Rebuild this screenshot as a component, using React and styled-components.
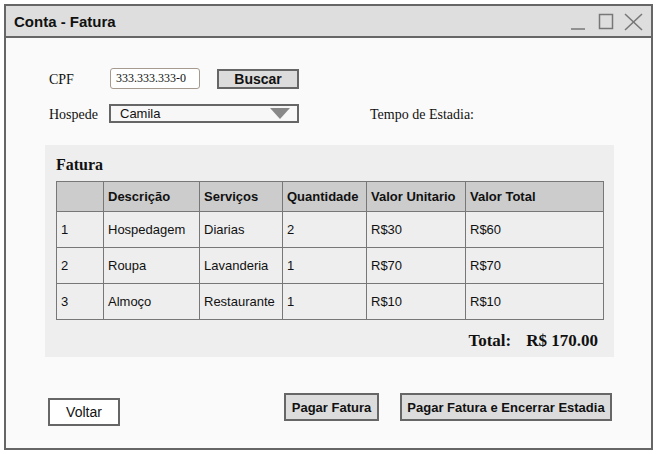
import styled, { createGlobalStyle } from "styled-components";

const GlobalStyle = createGlobalStyle`
  html, body {
    margin: 0;
    padding: 0;
    background: #ffffff;
  }
  body {
    font-family: "Liberation Sans", Arial, sans-serif;
    color: #111;
  }
`;

const items = [
  { n: "1", desc: "Hospedagem", serv: "Diarias", qtd: "2", unit: "R$30", total: "R$60" },
  { n: "2", desc: "Roupa", serv: "Lavanderia", qtd: "1", unit: "R$70", total: "R$70" },
  { n: "3", desc: "Almoço", serv: "Restaurante", qtd: "1", unit: "R$10", total: "R$10" },
];

const colWidths = [47, 96, 83, 84, 99, 138];

export default function App() {
  return (
    <>
      <GlobalStyle />
      <Window>
        <TitleBar>
          <Title>Conta - Fatura</Title>
          <Controls width="80" height="20" viewBox="0 0 80 20">
            <line x1="4" y1="17" x2="18" y2="17" />
            <rect x="32.5" y="2.5" width="13" height="14" />
            <line x1="58" y1="2" x2="75" y2="18" />
            <line x1="75" y1="2" x2="58" y2="18" />
          </Controls>
        </TitleBar>
        <Content>
          <Form>
            <Row>
              <Label width={61}>CPF</Label>
              <CpfInput>333.333.333-0</CpfInput>
              <GrayButton $w={82} $h={20} $size={14}>Buscar</GrayButton>
            </Row>
            <Row $gap={15}>
              <Label width={60}>Hospede</Label>
              <Select>
                <span>Camila</span>
                <Arrow width="20" height="11" viewBox="0 0 20 11">
                  <polygon points="0,0 20,0 10,11" />
                </Arrow>
              </Select>
              <StayLabel>Tempo de Estadia:</StayLabel>
            </Row>
          </Form>
          <Panel>
            <PanelTitle>Fatura</PanelTitle>
            <Table>
              <colgroup>
                {colWidths.map((w, i) => (
                  <col key={i} style={{ width: w }} />
                ))}
              </colgroup>
              <thead>
                <tr>
                  <Th></Th>
                  <Th>Descrição</Th>
                  <Th>Serviços</Th>
                  <Th>Quantidade</Th>
                  <Th>Valor Unitario</Th>
                  <Th>Valor Total</Th>
                </tr>
              </thead>
              <tbody>
                {items.map((it) => (
                  <tr key={it.n}>
                    <Td>{it.n}</Td>
                    <Td>{it.desc}</Td>
                    <Td>{it.serv}</Td>
                    <Td>{it.qtd}</Td>
                    <Td>{it.unit}</Td>
                    <Td>{it.total}</Td>
                  </tr>
                ))}
              </tbody>
            </Table>
            <TotalLine>
              <span>Total:</span>
              <TotalValue>R$ 170.00</TotalValue>
            </TotalLine>
          </Panel>
          <Footer>
            <PlainButton>Voltar</PlainButton>
            <Actions>
              <GrayButton $w={95} $h={28} $size={13}>Pagar Fatura</GrayButton>
              <GrayButton $w={212} $h={28} $size={13}>Pagar Fatura e Encerrar Estadia</GrayButton>
            </Actions>
          </Footer>
        </Content>
      </Window>
    </>
  );
}

const Window = styled.div`
  box-sizing: border-box;
  margin: 4px 0 0 4px;
  width: 649px;
  height: 446px;
  border: 2px solid #666;
  background: #fafafa;
  display: flex;
  flex-direction: column;
`;

const TitleBar = styled.div`
  height: 30px;
  border-bottom: 2px solid #666;
  background: #dedede;
  display: flex;
  align-items: center;
  justify-content: space-between;
  padding: 0 4px 0 8px;
`;

const Title = styled.div`
  font-weight: bold;
  font-size: 15px;
`;

const Controls = styled.svg`
  stroke: #777;
  stroke-width: 1.5;
  fill: none;
  margin-top: 2px;
`;

const Content = styled.div`
  padding: 30px 37px 0 39px;
  display: flex;
  flex-direction: column;
`;

const Form = styled.div`
  padding-left: 4px;
  display: flex;
  flex-direction: column;
`;

const Row = styled.div`
  display: flex;
  align-items: center;
  margin-top: ${(p) => p.$gap || 0}px;
`;

const Label = styled.div`
  width: ${(p) => p.width}px;
  font-family: "Liberation Serif", "Times New Roman", serif;
  font-size: 14px;
  padding-top: 2px;
`;

const CpfInput = styled.div`
  box-sizing: border-box;
  width: 90px;
  height: 21px;
  margin-right: 17px;
  border: 1px solid #a69a8e;
  border-radius: 3px;
  background: #fff;
  padding-left: 5px;
  display: flex;
  align-items: center;
  font-family: "Liberation Serif", "Times New Roman", serif;
  font-size: 12px;
`;

const GrayButton = styled.div`
  box-sizing: border-box;
  width: ${(p) => p.$w}px;
  height: ${(p) => p.$h}px;
  border: 2px solid #666;
  background: #dcdcdc;
  display: flex;
  align-items: center;
  justify-content: center;
  font-weight: bold;
  font-size: ${(p) => p.$size}px;
`;

const PlainButton = styled.div`
  box-sizing: border-box;
  width: 72px;
  height: 28px;
  margin-top: 5px;
  border: 2px solid #666;
  background: #fff;
  display: flex;
  align-items: center;
  justify-content: center;
  font-size: 14px;
`;

const Select = styled.div`
  box-sizing: border-box;
  width: 190px;
  height: 19px;
  border: 2px solid #666;
  background: #f7f7f7;
  display: flex;
  align-items: center;
  justify-content: space-between;
  padding: 0 7px 0 9px;
  font-size: 13px;
`;

const Arrow = styled.svg`
  fill: #888;
`;

const StayLabel = styled.div`
  margin-left: 71px;
  font-family: "Liberation Serif", "Times New Roman", serif;
  font-size: 14px;
  padding-top: 2px;
`;

const Panel = styled.div`
  margin-top: 22px;
  background: #eeeeee;
  padding: 10px 11px 6px 11px;
  display: flex;
  flex-direction: column;
`;

const PanelTitle = styled.div`
  font-family: "Liberation Serif", "Times New Roman", serif;
  font-weight: bold;
  font-size: 16px;
  line-height: 20px;
  margin-bottom: 6px;
`;

const Table = styled.table`
  border-collapse: collapse;
  table-layout: fixed;
  width: 548px;
  font-size: 13px;
`;

const Th = styled.th`
  height: 29px;
  padding: 0 4px;
  border: 1px solid #777;
  background: #cccccc;
  text-align: left;
  font-weight: bold;
`;

const Td = styled.td`
  height: 35px;
  padding: 0 4px;
  border: 1px solid #777;
  text-align: left;
  white-space: nowrap;
`;

const TotalLine = styled.div`
  margin-top: 11px;
  padding-right: 5px;
  display: flex;
  justify-content: flex-end;
  font-family: "Liberation Serif", "Times New Roman", serif;
  font-weight: bold;
  font-size: 17px;
  line-height: 20px;
`;

const TotalValue = styled.span`
  margin-left: 15px;
`;

const Footer = styled.div`
  margin-top: 36px;
  padding: 0 2px 0 3px;
  display: flex;
  justify-content: space-between;
  align-items: flex-start;
`;

const Actions = styled.div`
  display: flex;
  gap: 21px;
`;
